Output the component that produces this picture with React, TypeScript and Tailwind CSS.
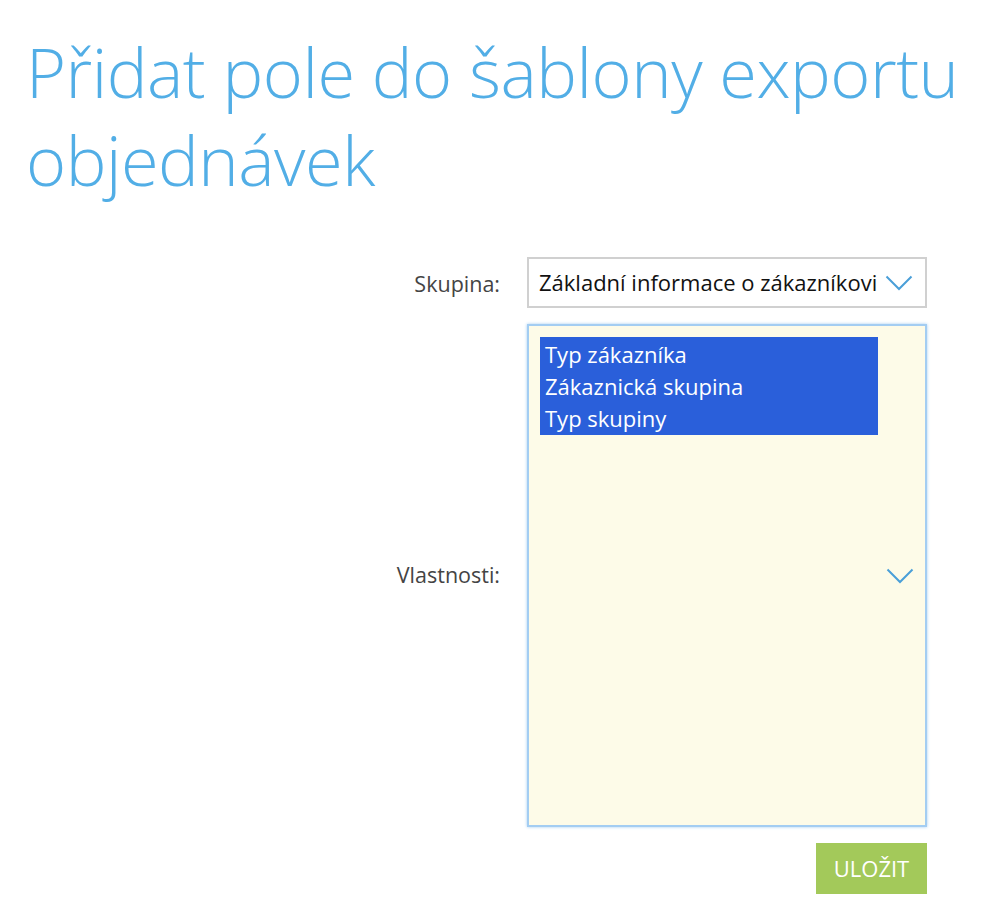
export default function App() {
  const options = ["Typ zákazníka", "Zákaznická skupina", "Typ skupiny"];

  const Chevron = () => (
    <svg width="28" height="16" viewBox="0 0 28 16" fill="none">
      <path d="M1.5 1.5 L14 14 L26.5 1.5" stroke="#4a9fd8" strokeWidth="2" />
    </svg>
  );

  return (
    <div className="min-h-[906px] bg-white font-['Open_Sans',sans-serif]">
      <div className="pl-[26px] pt-[28px]">
        <h1 className="text-[68.5px] font-light leading-[88px] text-[#52aee6] tracking-[-0.5px]">
          Přidat pole do šablony exportu objednávek
        </h1>
      </div>

      <div className="mt-[53px] grid grid-cols-[500px_400px] gap-x-[27px]">
        <label className="self-center pt-[3px] text-right text-[21.5px] text-[#444]">Skupina:</label>
        <div className="flex h-[51px] items-center justify-between overflow-hidden border-2 border-[#d0d0d0] bg-white pl-[10px] pr-[12px]">
          <span className="whitespace-nowrap text-[22px] text-[#111]">Základní informace o zákazníkovi</span>
          <Chevron />
        </div>

        <label className="mt-4 self-center text-right text-[21.5px] text-[#444]">Vlastnosti:</label>
        <div className="mt-4 flex h-[503px] border-2 border-[#a3cdf2] bg-[#fdfbe8] shadow-[0_0_3px_#a3cdf2]">
          <div className="flex-1 pl-[11px] pt-[11px]">
            <div className="w-[338px] bg-[#2a5fda] py-[1px]">
              {options.map((o) => (
                <div key={o} className="h-[32px] pl-[5px] text-[22px] leading-[32px] text-white">
                  {o}
                </div>
              ))}
            </div>
          </div>
          <div className="flex items-center pr-[11px]">
            <Chevron />
          </div>
        </div>

        <div />
        <div className="mt-[16px] flex justify-end">
          <button className="h-[51px] w-[111px] bg-[#a3c95a] text-[22px] text-white">ULOŽIT</button>
        </div>
      </div>
    </div>
  );
}
